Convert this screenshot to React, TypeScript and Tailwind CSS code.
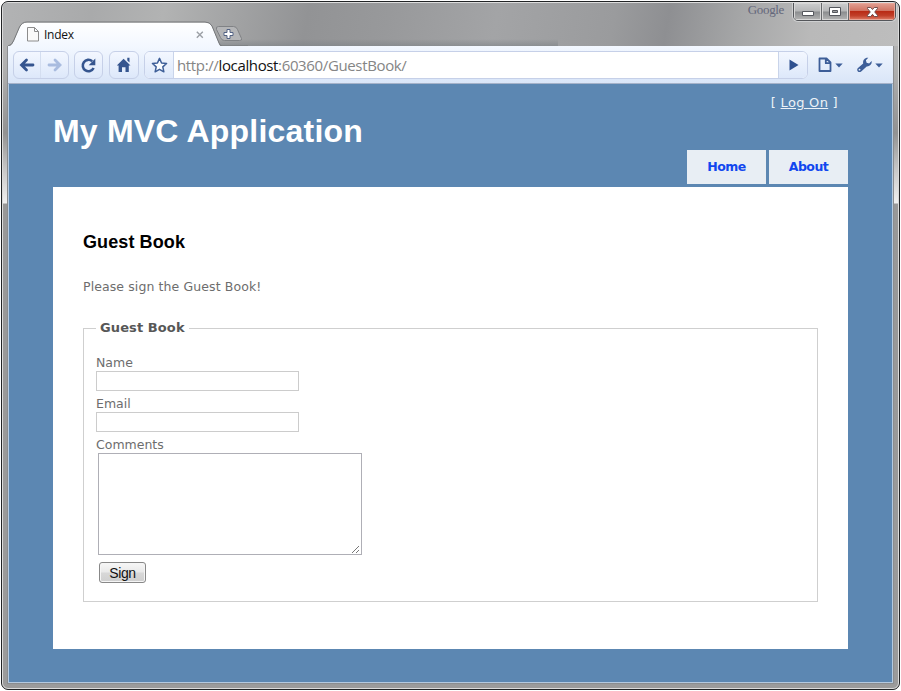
import React from "react";

const toolButton =
  "h-[28px] shrink-0 rounded-[6px] border border-[#c6d0e8] bg-gradient-to-b from-[#f3f7ff] to-[#dde8fa] flex items-center justify-center";

function TitleBar() {
  return (
    <div className="relative flex h-[43px] shrink-0 items-start overflow-hidden bg-[linear-gradient(100deg,#b2b3b4_0%,#a9aaab_10%,#b2b3b3_18%,#929395_34%,#98999b_43%,#a3a4a6_55%,#9a9b9d_68%,#8e8f92_74%,#a5a6a7_82%,#b9b9b9_90%,#bdbdbd_100%)]">
      <div className="absolute bottom-0 left-[210px] h-[7px] w-[345px] bg-gradient-to-t from-[#7d8286] to-transparent opacity-60" />
      <svg className="absolute left-[5px] top-[17px]" width="240" height="27" viewBox="0 0 240 27">
        <defs>
          <linearGradient id="tab" x1="0" y1="0" x2="0" y2="1">
            <stop offset="0" stopColor="#ffffff" />
            <stop offset="1" stopColor="#f2f7ff" />
          </linearGradient>
        </defs>
        <path d="M210.500 6.500h15q3 0 4 3l4 9q1 2-2 2h-15q-3 0-4-3l-4-8q-1-3 2-3z" fill="#b4b5b7" stroke="#808285" />
        <path d="M0 27q4-1 5.500-5.500l6-14q2.500-5 7.500-5h178q5 0 7 4l7 17q1 3 3 3.500z" fill="url(#tab)" />
        <path d="M0 26q4-1 5.500-5l6-14q2.500-5 7.500-5h178q5 0 7 4l7 17q1 3 3 3h26" fill="none" stroke="#747679" />
        <path d="M219 9.500h3v3h3v3h-3v3h-3v-3h-3v-3h3z" fill="#fff" stroke="#536384" />
      </svg>
      <div className="relative ml-[24px] mt-[24px] flex h-[15px] w-[178px] items-center">
        <svg width="13" height="15" viewBox="0 0 13 15">
          <path d="M.5.5h7l4 4v9.500H.5zM7.500.5v4h4" fill="#fafafa" stroke="#8c8c8c" />
        </svg>
        <span className="ml-[4px] font-['Open_Sans',sans-serif] text-[12px] leading-[15px] tracking-[-0.25px] text-[#111]">Index</span>
        <svg className="ml-auto mr-[1px]" width="8" height="8" viewBox="0 0 8 8">
          <path d="M.8.8l6 6M6.800.8l-6 6" stroke="#9b9fa5" strokeWidth="1.400" />
        </svg>
      </div>
      <span className="relative ml-auto mr-[9px] mt-[-2px] font-['Liberation_Serif',serif] text-[13px] leading-[18px] tracking-[-0.35px] text-[#64677b]">Google</span>
      <div className="relative mt-[-1px] flex h-[19px] w-[103px] shrink-0 overflow-hidden rounded-b-[5px] border border-[#54565a] shadow-[0_0_0_1px_#cfd0d1]">
        <div className="flex w-[28px] items-center justify-center border-r border-[#66686b] bg-[linear-gradient(#cccdce,#b5b6b7_48%,#8a8c8e_52%,#b4b4b4)] shadow-[inset_0_0_0_1px_#d7d7d7]">
          <svg className="mt-[1px]" width="14" height="12" viewBox="0 0 14 12"><path d="M1.500 5.500h11v4h-11z" fill="#fff" stroke="#55575d" /></svg>
        </div>
        <div className="flex w-[27px] items-center justify-center border-r border-[#66686b] bg-[linear-gradient(#cccdce,#b5b6b7_48%,#8a8c8e_52%,#b4b4b4)] shadow-[inset_0_0_0_1px_#d7d7d7]">
          <svg width="12" height="11" viewBox="0 0 12 11"><path d="M.5 1.500h11v8H.5zM3.500 4.500v2h5v-2z" fill="#fff" stroke="#55575d" fillRule="evenodd" /></svg>
        </div>
        <div className="flex flex-1 items-center justify-center bg-[linear-gradient(#e2a093,#d07463_46%,#b92b16_50%,#c1402a_75%,#e0806a)] shadow-[inset_0_0_0_1px_#e8a698]">
          <svg width="13" height="12" viewBox="0 0 13 12"><path d="M1.500 1.500h3.200l1.800 2 1.800-2h3.200v1L8.700 6l2.800 3.300v1.200H8.300l-1.800-2.200-1.800 2.200H1.500V9.300L4.300 6 1.500 2.500z" fill="#fff" stroke="#644" strokeWidth=".9" /></svg>
        </div>
      </div>
      <div className="w-[2px] shrink-0" />
    </div>
  );
}

function Caret() {
  return <svg width="8" height="5" viewBox="0 0 8 5"><path d="M.3.500h7.400L4 4.600z" fill="#3d5e98" /></svg>;
}

function Toolbar() {
  return (
    <div className="flex h-[38px] shrink-0 items-start border-b border-[#a5b2c9] bg-gradient-to-b from-[#f3f8ff] to-[#d9e5f8] pl-[5px] pt-[5px]">
      <div className={`${toolButton} w-[56px]`}>
        <div className="flex h-full w-[27px] items-center justify-center border-r border-[#d4def0]">
          <svg width="16" height="14" viewBox="0 0 16 14"><path d="M14 7H3.500M7.500 2L2.500 7l5 5" fill="none" stroke="#35558f" strokeWidth="2.800" strokeLinecap="round" /></svg>
        </div>
        <div className="flex flex-1 items-center justify-center">
          <svg width="16" height="14" viewBox="0 0 16 14"><path d="M2 7h10.500M8 2l5 5-5 5" fill="none" stroke="#a9bcdf" strokeWidth="2.800" strokeLinecap="round" /></svg>
        </div>
      </div>
      <div className={`${toolButton} ml-[5px] w-[29px]`}>
        <svg width="17" height="17" viewBox="0 0 17 17"><path d="M13.600 11A5.700 5.700 0 1 1 12.200 4.200" fill="none" stroke="#35558f" strokeWidth="2.600" /><path d="M15.300 1.500v6.700H8.700z" fill="#35558f" /></svg>
      </div>
      <div className={`${toolButton} ml-[6px] w-[30px]`}>
        <svg width="16" height="16" viewBox="0 0 16 16"><path d="M7.600 1.800l6.900 6.700h-1.700V15H9.500v-4.800H6V15H2.600V8.500H.8zM11.300.7h2.200v4.800l-2.200-2.100z" fill="#35558f" /></svg>
      </div>
      <div className="ml-[5px] flex h-[28px] w-[664px] overflow-hidden rounded-[6px] border border-[#c6d0e8] bg-white">
        <div className="flex w-[29px] items-center justify-center border-r border-[#c9d4ea] bg-gradient-to-b from-[#f3f7ff] to-[#dde8fa]">
          <svg width="17" height="16" viewBox="0 0 17 16"><path d="M8.500 1.400l2.050 4.600 5 .55-3.750 3.350 1.050 4.900L8.500 12.300l-4.350 2.500L5.200 9.900 1.450 6.550l5-.55z" fill="#f8fbff" stroke="#3d5e98" strokeWidth="1.500" strokeLinejoin="round" /></svg>
        </div>
        <div className="flex-1 whitespace-pre pl-[3px] font-['Open_Sans',sans-serif] text-[15px] leading-[26px] tracking-[-0.36px] text-[#858585]">
          http://<span className="text-[#111]">localhost</span>:60360/GuestBook/
        </div>
        <div className="flex w-[29px] items-center justify-center border-l border-[#c9d4ea] bg-gradient-to-b from-[#f3f7ff] to-[#dde8fa]">
          <svg className="ml-px" width="10" height="12" viewBox="0 0 10 12"><path d="M.5.500L9.500 6l-9 5.500z" fill="#2f5190" /></svg>
        </div>
      </div>
      <div className="ml-[10px] flex h-[28px] items-center gap-[3px]">
        <svg width="14" height="16" viewBox="0 0 14 16"><path d="M1.500 1.500h7l4 4V14h-11zM7.800 1.500v4.700h4.700" fill="none" stroke="#3d5e98" strokeWidth="1.800" strokeLinejoin="round" /></svg>
        <Caret />
      </div>
      <div className="ml-[13px] flex h-[28px] items-center gap-[2px]">
        <svg width="17" height="16" viewBox="0 0 17 16"><path d="M12.300.8L9.900 3.300l.7 2.500 2.500.6L15.600 4c.7 3.200-1.700 5.600-4.900 5.400L5.200 14.400c-2.300 1.900-5.200-.8-3.500-3.200l5.500-4.800C6.500 3.300 9 .2 12.300.8zM3.500 11.700a.9.900 0 1 0 .1 1.800.9.900 0 0 0-.1-1.800z" fill="#3d5e98" fillRule="evenodd" /></svg>
        <Caret />
      </div>
    </div>
  );
}

function Page() {
  return (
    <main className="flex h-[599px] flex-col border-x border-b border-[#b4cae0] bg-[#5c87b2] px-[44px] font-['DejaVu_Sans',sans-serif] text-[12.500px] text-[#6d6d6d]">
      <header className="flex h-[103px] shrink-0 justify-between">
        <h1 className="pt-[27px] font-['Liberation_Sans',sans-serif] text-[32px] font-bold leading-[40px] tracking-[0.2px] text-white">My MVC Application</h1>
        <div className="flex flex-col items-end justify-between pb-[3px] pt-[11px]">
          <div className="mr-[10px] whitespace-pre text-[13px] leading-[16px] tracking-[0.3px] text-[#edf2f7]">[ <a className="underline">Log On</a> ]</div>
          <nav className="flex gap-[3px] text-[12.500px] font-bold tracking-[-0.55px] text-[#1147ef]">
            <a className="flex h-[34px] w-[79px] items-center justify-center bg-[#e8eef4] pt-px">Home</a>
            <a className="flex h-[34px] w-[79px] items-center justify-center bg-[#e8eef4] pt-px">About</a>
          </nav>
        </div>
      </header>
      <section className="h-[462px] bg-white px-[30px] pt-[44px]">
        <h2 className="font-['Liberation_Sans',sans-serif] text-[18px] font-bold leading-[22px] tracking-[0.1px] text-black">Guest Book</h2>
        <p className="mt-[26px] leading-[16px] tracking-[0.1px]">Please sign the Guest Book!</p>
        <fieldset className="mt-[25px] h-[282px] border border-[#cfcfcf] px-[12px]">
          <legend className="ml-0 px-[4px] text-[13px] font-bold leading-[16px] tracking-[0.1px] text-[#575757]">Guest Book</legend>
          <form className="flex flex-col items-start pt-[19px]">
            <label className="leading-[16px]">Name</label>
            <input className="mt-0 h-[20px] w-[203px] border border-[#cccccc]" />
            <label className="mt-[5px] leading-[16px]">Email</label>
            <input className="h-[20px] w-[203px] border border-[#cccccc]" />
            <label className="mt-[5px] leading-[16px]">Comments</label>
            <div className="ml-[2px] flex h-[102px] w-[264px] items-end justify-end border border-[#afafb6]">
              <svg width="10" height="9" viewBox="0 0 10 9"><path d="M1 8l7-7M5 8l3-3" stroke="#777" /></svg>
            </div>
            <button type="button" className="ml-[3px] mt-[7px] h-[21px] w-[47px] rounded-[3px] border border-[#888] bg-[linear-gradient(#f7f7f7,#e9e9e9_48%,#d8d8d8_52%,#cfcfcf)] font-['Liberation_Sans',sans-serif] text-[14px] leading-[18px] tracking-[-0.4px] text-[#111] shadow-[inset_0_0_0_1px_#f5f5f5]">Sign</button>
          </form>
        </fieldset>
      </section>
    </main>
  );
}

export default function App() {
  return (
    <div className="h-[691px] w-[901px] overflow-hidden bg-white pl-px pt-px">
      <div className="h-[689px] w-[899px] overflow-hidden rounded-[7px] border border-[#222426] bg-[#999]">
        <div className="flex h-full flex-col rounded-[6px] border border-[#dcdcdc] bg-[linear-gradient(#bbb_0px,#b0b0b0_65px,#929292_130px,#c5c5c5_165px,#f0f0f0_200px,#989898_201px,#9b9b9b_100%)]">
          <TitleBar />
          <div className="mx-[5px] flex flex-col shadow-[0_0_0_1px_#8b8d90]">
            <Toolbar />
            <Page />
          </div>
        </div>
      </div>
    </div>
  );
}
